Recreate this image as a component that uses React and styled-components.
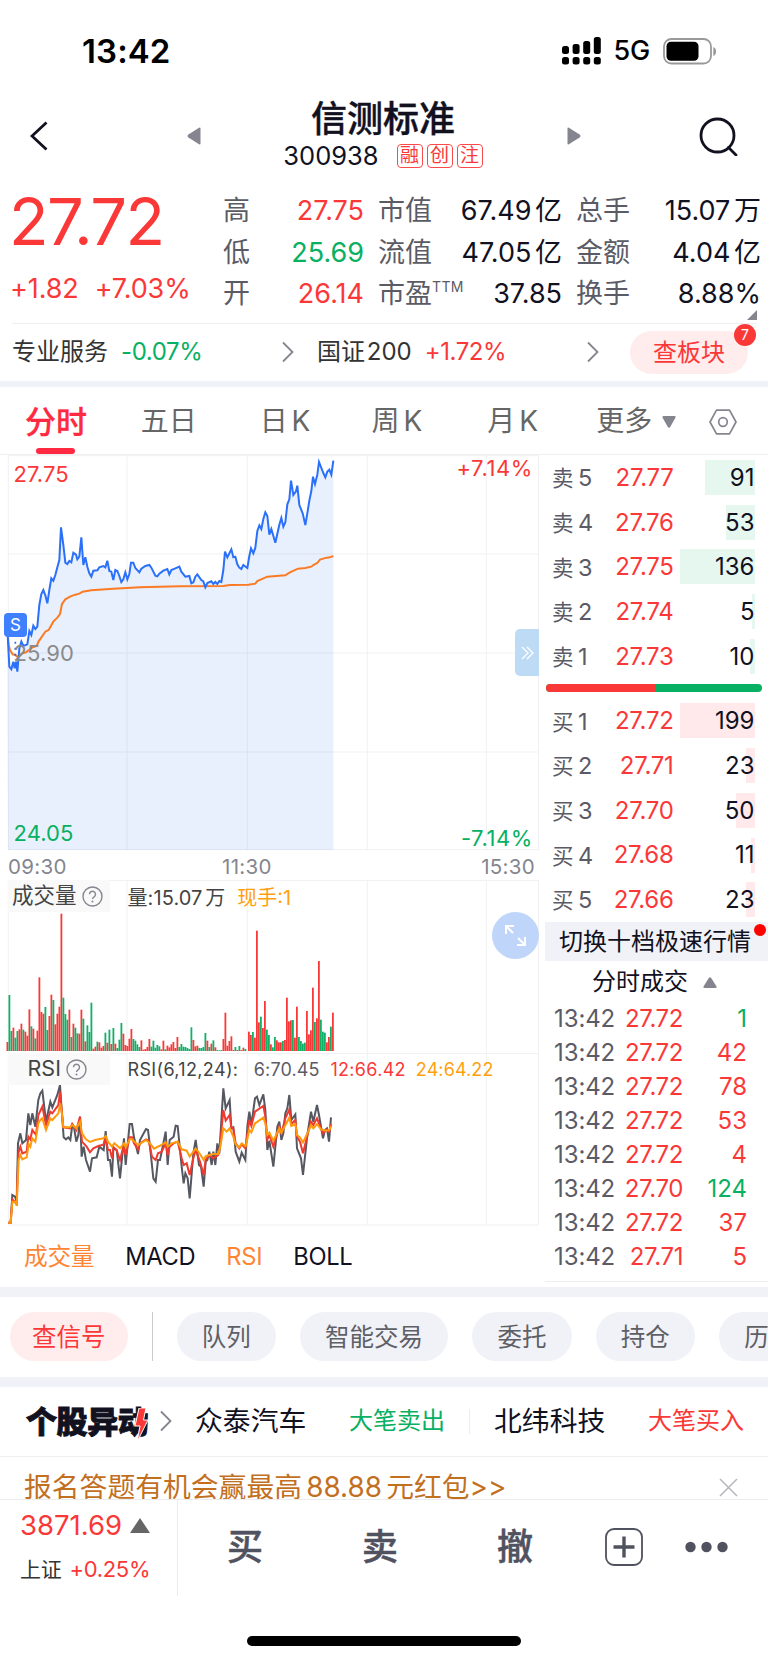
import { useState } from "react";
import styled, { createGlobalStyle } from "styled-components";

const GlobalStyle = createGlobalStyle`
  * {
    box-sizing: border-box;
  }
  body {
    margin: 0;
    background: #fff;
    color: #11111f;
    font-family: Inter, "Noto Sans CJK SC", sans-serif;
    line-height: 1.2;
  }
  svg {
    display: block;
    flex: none;
  }
`;

const RED = "#fb3838";
const GREEN = "#07b062";
const GRAY = "#5b5b66";

const Page = styled.div`
  width: 768px;
  height: 1663px;
  overflow: hidden;
  display: flex;
  flex-direction: column;
  > * {
    flex: none;
  }
`;

const Band = styled.div`
  height: ${(p) => p.$h}px;
  background: #f0f2f7;
`;

/* status bar */
const StatusBar = styled.div`
  height: 100px;
  padding: 3px 52px 0 82px;
  display: flex;
  align-items: center;
  justify-content: space-between;
  color: #000;
`;
const Clock = styled.div`
  font-size: 33px;
  font-weight: 600;
  letter-spacing: 0.1px;
`;
const StatusIcons = styled.div`
  display: flex;
  align-items: center;
  gap: 13px;
  font-size: 27px;
  font-weight: 500;
  letter-spacing: -0.2px;
`;

/* header */
const Header = styled.header`
  height: 72px;
  padding: 0 30px;
  display: flex;
  align-items: center;
  justify-content: space-between;
`;
const Side = styled.div`
  width: 171px;
  display: flex;
  align-items: center;
  justify-content: space-between;
`;
const TitleBox = styled.div`
  text-align: center;
  height: 74px;
  margin-right: 2px;
`;
const Title = styled.h1`
  margin: 0;
  font-size: 36px;
  line-height: 40px;
  font-weight: 500;
  -webkit-text-stroke: 0.4px #11111f;
`;
const CodeLine = styled.div`
  display: flex;
  align-items: center;
  height: 34px;
  gap: 4px;
  font-size: 25.5px;
`;
const Code = styled.span`
  margin-right: 14px;
`;
const Tag = styled.span`
  width: 26px;
  height: 24px;
  border: 1.5px solid #fb4a4a;
  border-radius: 4px;
  color: ${RED};
  font-size: 19px;
  line-height: 21px;
  text-align: center;
`;

/* quote */
const Quote = styled.section`
  height: 151px;
  padding: 18px 0 0 10px;
  display: flex;
`;
const PriceBox = styled.div`
  flex: none;
  width: 213px;
  color: ${RED};
`;
const BigPrice = styled.div`
  font-size: 65px;
  line-height: 64px;
  letter-spacing: -1.6px;
  margin-left: -1px;
`;
const Change = styled.div`
  display: flex;
  gap: 16px;
  padding-top: 14px;
  font-size: 27px;
  line-height: 41px;
  letter-spacing: -0.1px;
`;
const StatCol = styled.div`
  width: ${(p) => p.$w}px;
  margin-right: 14px;
  flex: none;
`;
const Stat = styled.div`
  height: 41.5px;
  padding-top: 1px;
  display: flex;
  align-items: center;
  justify-content: space-between;
  font-size: 27px;
  white-space: nowrap;
  word-spacing: -4px;
  color: ${GRAY};
  sup {
    font-size: 14px;
    line-height: 14px;
    vertical-align: 11px;
    letter-spacing: 0.4px;
  }
  b {
    font-weight: 400;
    color: ${(p) => p.$color || "#11111f"};
  }
`;
const Corner = styled.div`
  height: 0;
  display: flex;
  justify-content: flex-end;
  align-items: flex-end;
  padding-right: 11px;
  margin-bottom: 3px;
  margin-top: -3px;
`;
const Hairline = styled.div`
  height: 1px;
  margin: ${(p) => p.$top || 0}px ${(p) => p.$m || 0}px 0;
  background: #efeff2;
`;
const Sectors = styled.section`
  height: 57px;
  padding: 0 20px 0 12px;
  display: flex;
  align-items: center;
  font-size: 24px;
  color: #333;
`;
const Sector = styled.div`
  width: ${(p) => p.$w}px;
  padding-left: ${(p) => p.$pl || 0}px;
  display: flex;
  align-items: center;
  gap: 13px;
  white-space: nowrap;
  word-spacing: -5px;
  em {
    font-style: normal;
    color: ${(p) => p.$color};
    letter-spacing: -0.4px;
  }
  svg {
    margin-left: auto;
    margin-right: 1px;
  }
`;
const BoardPill = styled.div`
  position: relative;
  width: 118px;
  height: 43px;
  margin-left: auto;
  border-radius: 22px;
  background: #ffecec;
  color: ${RED};
  line-height: 43px;
  text-align: center;
`;
const Badge = styled.span`
  position: absolute;
  right: -8px;
  top: -7px;
  width: 22px;
  height: 22px;
  border-radius: 50%;
  background: ${RED};
  color: #fff;
  font-size: 14px;
  line-height: 22px;
`;

/* period tabs */
const Tabs = styled.nav`
  height: 67px;
  padding: 2px 31px 0 25px;
  display: flex;
  align-items: center;
  color: #666;
  font-size: 28px;
  word-spacing: -4px;
`;
const Tab = styled.div`
  position: relative;
  width: ${(p) => p.$w}px;
  white-space: nowrap;
  ${(p) =>
    p.$active &&
    `
    color: #ff2942;
    font-size: 31px;
    font-weight: 500;
    -webkit-text-stroke: 0.3px #ff2942;
    &::after {
      content: "";
      position: absolute;
      left: 11px;
      bottom: -14px;
      width: 39px;
      height: 6px;
      border-radius: 3px;
      background: #ff2942;
    }
  `}
`;
const MoreTab = styled.div`
  display: flex;
  align-items: center;
  gap: 10px;
  width: 113px;
`;

/* charts */
const Main = styled.main`
  height: 832px;
  display: flex;
`;
const Charts = styled.div`
  width: 545px;
  padding-left: 8px;
`;
const Pane = styled.div`
  position: relative;
  width: 531px;
  height: ${(p) => p.$h}px;
  svg {
    overflow: visible;
  }
`;
const ScaleLabel = styled.span`
  position: absolute;
  ${(p) => p.$side}: ${(p) => (p.$side === "right" ? 6 : 5.5)}px;
  top: ${(p) => p.$top}px;
  font-size: 22px;
  line-height: 24px;
  letter-spacing: ${(p) => (p.$side === "right" ? 0.6 : 0.1)}px;
  color: ${(p) => p.$color};
`;
const SideToggle = styled.button`
  position: absolute;
  right: 0;
  top: 174px;
  width: 24px;
  height: 47px;
  padding: 0 0 0 6px;
  border: 0;
  border-radius: 5px 0 0 5px;
  background: #bedbf6;
`;
const SellMark = styled.span`
  position: absolute;
  left: -4px;
  top: 158px;
  width: 23px;
  height: 24px;
  border-radius: 4px;
  background: #3f80ff;
  color: #fff;
  font-size: 17px;
  line-height: 24px;
  text-align: center;
`;
const TimeAxis = styled.div`
  width: 530px;
  height: 30px;
  padding-right: 3px;
  display: grid;
  grid-template-columns: 214px 1fr auto;
  font-size: 20.5px;
  letter-spacing: 0.3px;
  line-height: 33px;
  color: #85858f;
`;
const PaneHead = styled.div`
  position: absolute;
  left: 0;
  top: 0;
  height: 32px;
  display: flex;
  align-items: center;
  white-space: nowrap;
  color: #444;
`;
const PaneName = styled.div`
  width: 102px;
  height: 32px;
  margin-right: 17.5px;
  padding-left: ${(p) => p.$pad}px;
  display: flex;
  align-items: center;
  gap: 5.5px;
  background: #f9f9f9;
  font-size: 21.5px;
`;
const Reading = styled.span`
  font-size: ${(p) => p.$size || 20}px;
  margin-right: ${(p) => p.$gap || 0}px;
  letter-spacing: ${(p) => p.$ls || 0}px;
  word-spacing: -3px;
  padding-top: ${(p) => (p.$size ? 2 : 4)}px;
  color: ${(p) => p.$color || "#444"};
`;
const ExpandButton = styled.button`
  position: absolute;
  right: 0.5px;
  top: 32px;
  width: 47px;
  height: 47px;
  padding: 11px;
  border: 0;
  border-radius: 50%;
  background: #bfd5fa;
`;
const IndicatorTabs = styled.div`
  height: 62px;
  padding: 3px 0 0 16px;
  display: flex;
  align-items: center;
  gap: 31px;
  font-size: 23.7px;
`;
const Indicator = styled.span`
  letter-spacing: -0.3px;
  color: ${(p) => (p.$on ? "#ff8534" : "#11111f")};
`;

/* order book */
const Book = styled.aside`
  width: 223px;
`;
const BookRow = styled.div`
  position: relative;
  height: 44.7px;
  padding: 2px 13.5px 0 7px;
  display: grid;
  grid-template-columns: 50px 71.5px 1fr;
  align-items: center;
  font-size: 24px;
  color: ${GRAY};
  > span {
    position: relative;
    white-space: nowrap;
  }
`;
const Level = styled.span`
  font-size: 21.5px;
  word-spacing: -1.5px;
  b {
    font-size: 23.5px;
    font-weight: 400;
  }
`;
const RowPrice = styled.span`
  color: ${RED};
  text-align: right;
  letter-spacing: -0.3px;
`;
const RowQty = styled.span`
  color: #11111f;
  text-align: right;
`;
const DepthBar = styled.i`
  position: absolute;
  right: 13px;
  top: 5px;
  height: 35px;
  background: ${(p) => (p.$sell ? "#e6f7ef" : "#ffe9eb")};
`;
const RatioBar = styled.div`
  height: 8px;
  width: 216px;
  margin: 6px 0 6px 1px;
  border-radius: 4px;
  overflow: hidden;
  display: flex;
  background: ${GREEN};
  i {
    width: 51%;
    background: ${RED};
  }
`;
const SwitchDepth = styled.div`
  position: relative;
  height: 39px;
  padding-left: 14px;
  background: #f0f2f7;
  font-size: 24px;
  line-height: 39px;
  white-space: nowrap;
  &::after {
    content: "";
    position: absolute;
    right: 2px;
    top: 2px;
    width: 12px;
    height: 12px;
    border-radius: 50%;
    background: #f00;
  }
`;
const DealsTitle = styled.div`
  height: 40px;
  padding: 3px 0 0 47px;
  display: flex;
  align-items: center;
  gap: 15px;
  font-size: 24px;
`;
const Deal = styled.div`
  height: 34.1px;
  padding: 2px 21px 0 9px;
  display: grid;
  grid-template-columns: 66px 63px 1fr;
  align-items: center;
  font-size: 24px;
  letter-spacing: -0.1px;
  color: ${GRAY};
  b {
    font-weight: 400;
    text-align: right;
    letter-spacing: -0.4px;
    color: ${RED};
  }
  b:last-child {
    letter-spacing: 0;
    color: ${(p) => (p.$down ? GREEN : RED)};
  }
`;

/* shortcuts */
const Shortcuts = styled.section`
  height: 79.5px;
  padding-left: 10px;
  display: flex;
  align-items: center;
  gap: 24px;
  overflow: hidden;
`;
const Shortcut = styled.div`
  flex: none;
  height: 49px;
  padding: 0 ${(p) => (p.$hot ? 22 : 25.2)}px;
  border-radius: 25px;
  font-size: 24.5px;
  line-height: 51px;
  background: ${(p) => (p.$hot ? "#ffecec" : "#f0f2f7")};
  color: ${(p) => (p.$hot ? RED : "#5f5f66")};
`;
const Divider = styled.i`
  flex: none;
  width: 1px;
  height: ${(p) => p.$h}px;
  margin-left: ${(p) => p.$ml || 0}px;
  background: ${(p) => p.$c || "#ccc"};
`;

/* unusual moves */
const Moves = styled.section`
  height: 68.5px;
  padding: 0 24px 0 26px;
  display: flex;
  align-items: center;
  white-space: nowrap;
`;
const MovesLogo = styled.div`
  position: relative;
  width: 134px;
  font-size: 31px;
  font-weight: 900;
  letter-spacing: -0.4px;
  -webkit-text-stroke: 0.9px #11111f;
  svg {
    position: absolute;
    left: 108px;
    top: 5px;
  }
`;
const MoveName = styled.span`
  margin-left: ${(p) => p.$ml}px;
  width: 154.5px;
  font-size: 27.8px;
`;
const MoveKind = styled.span`
  font-size: 24px;
  padding-top: 1px;
  color: ${(p) => p.$color};
`;

/* promo strip */
const Promo = styled.section`
  height: 42px;
  padding: 0 30px 0 24px;
  overflow: hidden;
  display: flex;
  justify-content: space-between;
  color: #c2701f;
  font-size: 27.8px;
  line-height: 60px;
  white-space: nowrap;
  word-spacing: -3.5px;
  svg {
    margin-top: 21px;
  }
`;

/* bottom bar */
const BottomBar = styled.footer`
  height: 97px;
  border-top: 1px solid #ececef;
  display: flex;
`;
const IndexBox = styled.div`
  width: 178px;
  padding: 5px 0 0 20px;
  border-right: 1px solid #ececef;
`;
const IndexValue = styled.div`
  display: flex;
  align-items: center;
  gap: 8px;
  height: 42px;
  font-size: 27.5px;
  color: ${RED};
`;
const IndexChange = styled.div`
  display: flex;
  align-items: center;
  gap: 8px;
  height: 46px;
  font-size: 22px;
  letter-spacing: -0.3px;
  color: ${RED};
  span {
    font-size: 21px;
    color: #333;
  }
`;
const Actions = styled.div`
  flex: 1;
  display: flex;
  align-items: center;
  padding: 0 40px 2px 49px;
  font-size: 36px;
  font-weight: 500;
  color: #51525f;
`;
const Action = styled.div`
  width: ${(p) => p.$w || 135}px;
  padding-top: 2px;
  -webkit-text-stroke: 0.5px #51525f;
`;
const Dots = styled.svg`
  margin-left: auto;
`;
const HomeBar = styled.div`
  width: 274px;
  height: 10px;
  margin: 40px auto 0;
  border-radius: 5px;
  background: #000;
`;

const stats = [
  {
    w: 141,
    rows: [
      ["高", "27.75", RED],
      ["低", "25.69", GREEN],
      ["开", "26.14", RED],
    ],
  },
  {
    w: 184,
    rows: [
      ["市值", "67.49 亿"],
      ["流值", "47.05 亿"],
      ["市盈", "37.85", null, "TTM"],
    ],
  },
  {
    w: 185,
    rows: [
      ["总手", "15.07 万"],
      ["金额", "4.04 亿"],
      ["换手", "8.88%"],
    ],
  },
];

const sells = [
  [5, "27.77", 91],
  [4, "27.76", 53],
  [3, "27.75", 136],
  [2, "27.74", 5],
  [1, "27.73", 10],
];
const buys = [
  [1, "27.72", 199],
  [2, "27.71", 23],
  [3, "27.70", 50],
  [4, "27.68", 11],
  [5, "27.66", 23],
];
const deals = [
  ["27.72", 1, true],
  ["27.72", 42],
  ["27.72", 78],
  ["27.72", 53],
  ["27.72", 4],
  ["27.70", 124, true],
  ["27.72", 37],
  ["27.71", 5],
];

// chart paths are kept at three units per pixel
const price =
  "22,535 28,650 34,658 40,635 44,655 48,635 52,665 58,595 64,575 70,588 82,583 88,543 94,555 100,527 106,537 112,530 118,465 124,432 130,420 136,436 142,460 148,420 154,385 160,392 166,375 172,352 178,330 183,232 190,285 196,338 202,342 208,333 214,337 220,308 228,314 232,328 238,320 244,262 250,345 256,322 262,350 268,370 274,380 280,362 292,361 298,352 310,348 316,352 322,332 328,363 334,365 340,390 346,360 352,363 358,378 364,396 370,388 376,367 382,388 388,372 393,338 400,338 406,354 418,367 424,356 436,348 448,345 454,353 466,377 472,379 478,371 490,362 502,357 508,373 514,360 526,355 538,350 544,365 556,380 568,378 574,400 580,397 586,380 592,373 604,390 610,394 616,412 622,399 634,394 640,402 646,396 652,402 658,393 664,396 670,360 675,305 682,322 694,298 700,322 706,320 712,343 718,353 724,357 730,345 742,354 748,318 753,295 760,310 766,293 772,243 778,226 784,237 790,207 796,187 802,198 808,254 814,237 826,278 838,224 844,204 850,230 856,217 862,163 868,148 873,92 880,135 888,124 892,107 898,165 908,190 916,225 922,190 928,152 934,123 939,80 945,102 952,74 957,36 970,69 976,82 982,65 988,59 994,74 1000,32";
const average =
  "22,535 26,585 30,600 38,613 46,615 54,622 66,610 78,607 96,593 110,588 116,574 136,545 146,540 160,515 172,503 180,492 186,462 196,448 210,440 226,434 238,431 248,425 274,421 340,416 420,412 540,409 670,408 690,405 745,404 766,401 772,393 802,380 856,376 870,367 894,356 916,354 934,350 940,345 952,339 960,329 980,323 990,322 1000,318";

// one bar a minute: r = up, g = down
const volumes =
  "r27 g168 g60 r70 g40 g60 r65 r82 g64 r58 r46 r125 g74 r67 g38 r61 r221 r117 r112 g132 g63 r105 r169 g153 r80 r112 r133 r412 g160 g111 g94 r124 g42 r82 g70 g53 r52 r124 g97 r29 g77 g57 g145 r7 r13 g28 r26 r10 r15 g55 r25 g64 r21 g69 r22 g9 g34 g84 r52 r18 r15 r37 r66 g36 g31 g20 g12 r32 r4 r6 r12 r36 g13 g31 g10 g18 g14 r5 r31 g5 r16 r11 r20 r27 r9 r42 g12 g21 g13 g12 g9 g6 g71 r33 r14 r16 g9 g9 g12 g54 r31 g12 r22 g32 r11 g3 g2 g3 r36 r115 r16 r30 r44 r3 g12 r3 g15 r3 r10 g6 r0 r58 r48 g57 r40 r361 r86 g103 r69 r150 g64 g48 r20 g11 g42 r32 r26 r26 g30 r33 r160 r89 r92 g93 r40 r133 g42 g30 g22 g25 r120 r50 r62 r190 g87 r98 r270 g94 g58 g55 r26 r42 g73 r115".split(
    " "
  );

const rsi6 =
  "25,518 32,518 37,435 45,440 50,455 54,280 61,250 67,280 78,270 85,190 91,225 97,190 106,230 115,150 121,130 127,122 138,215 151,155 157,172 172,135 180,105 184,165 191,262 198,268 205,262 211,270 217,225 222,232 229,275 235,255 240,200 245,320 251,290 258,330 270,365 276,325 290,322 298,290 311,300 317,243 324,330 330,330 336,380 340,295 350,300 360,385 372,265 377,345 389,222 396,222 402,262 414,312 420,270 438,237 444,240 450,290 460,385 467,395 474,330 480,330 497,245 503,345 509,270 521,260 527,227 533,228 545,350 551,400 556,370 563,385 569,445 580,310 587,270 597,345 603,350 611,410 617,335 622,330 628,305 635,345 640,305 646,345 652,280 658,310 670,115 677,175 689,150 694,235 700,232 707,305 718,335 725,308 736,330 742,230 748,185 754,225 765,145 771,140 778,165 790,133 796,180 802,300 808,272 820,350 832,230 838,215 844,270 850,250 856,190 862,175 868,135 874,210 886,193 891,295 903,325 909,375 922,255 933,185 940,215 951,165 957,195 969,265 975,240 981,235 987,275 993,202";
const rsi12 =
  "25,518 32,518 37,448 50,462 55,310 61,290 67,310 80,305 85,260 91,268 97,240 108,255 115,195 127,170 138,225 151,185 157,190 175,165 180,125 184,170 190,232 210,235 217,222 229,240 240,200 246,275 260,290 270,307 280,295 295,288 310,284 317,265 324,300 330,300 336,325 341,292 350,300 360,330 370,290 377,315 389,262 396,262 402,280 414,298 420,280 438,268 446,272 456,320 467,330 474,310 485,305 497,280 503,315 509,290 521,280 533,275 545,325 551,345 560,340 569,375 580,325 587,300 600,335 611,375 617,330 628,315 640,325 655,315 660,290 670,180 677,212 689,195 694,232 700,235 707,280 718,295 725,283 736,295 748,210 754,228 765,185 790,168 796,200 802,268 808,255 820,290 838,230 844,250 856,205 868,178 874,222 886,210 891,260 900,275 909,310 920,265 933,215 940,225 951,205 963,235 969,250 981,238 988,245 993,222";
const rsi24 =
  "25,518 32,518 37,455 45,455 50,467 56,330 61,315 67,328 80,322 86,282 91,290 97,265 106,275 115,220 121,210 127,205 138,240 151,205 157,210 175,190 181,160 185,185 190,232 210,232 217,225 229,235 240,215 246,250 258,268 270,276 285,270 310,265 317,258 324,275 336,290 343,280 360,295 372,280 377,292 389,268 396,268 414,285 438,270 450,280 462,296 478,288 497,277 503,290 515,280 533,275 545,298 560,302 569,320 587,295 600,312 611,330 617,318 640,312 655,312 661,290 670,235 680,245 689,235 700,260 707,283 718,292 725,280 737,288 748,240 754,247 765,220 790,203 796,220 802,255 808,248 820,272 838,235 844,248 868,203 874,228 886,222 891,255 900,262 909,277 922,250 933,225 940,235 951,222 963,238 978,242 988,240 993,228";

const columns = [25, 381, 742, 1102, 1459, 1615];

const Grid = ({ top, bottom, rows }) => (
  <g stroke="#f1f1f3" strokeWidth="3">
    {columns.map((x) => (
      <path key={x} d={`M${x} ${top}V${bottom}`} />
    ))}
    {rows.map((y) => (
      <path key={y} d={`M24 ${y}H1616`} />
    ))}
  </g>
);

const Chevron = () => (
  <svg width="12" height="22" viewBox="0 0 12 22" fill="none">
    <path d="M1 1.5L10.5 11L1 20.5" stroke="#85858f" strokeWidth="1.8" />
  </svg>
);

const Help = () => (
  <svg width="21" height="21" viewBox="0 0 21 21" fill="none">
    <g stroke="#85858f" strokeWidth="1.4">
      <circle cx="10.5" cy="10.5" r="9.5" />
      <path d="M7.5 8.3a3 3 0 1 1 4.6 2.5c-1.1.8-1.6 1.2-1.6 2.3" />
    </g>
    <circle cx="10.5" cy="15.4" r="1" fill="#85858f" />
  </svg>
);

const PriceChart = () => (
  <Pane $h={395}>
    <svg width="531" height="395" viewBox="24 15 1593 1185" fill="none">
      <Grid top={15} bottom={1200} rows={[17, 312, 609, 906, 1199]} />
      <polygon
        points={`24,1200 ${price} 1000,1200`}
        fill="#2f74ee"
        fillOpacity="0.11"
      />
      <polyline points={average} stroke="#fb7a24" strokeWidth="6" />
      <polyline points={price} stroke="#2b70f8" strokeWidth="6" />
      <path d="M46 575V630" stroke="#2b70f8" strokeWidth="5" strokeDasharray="6 12" />
    </svg>
    <ScaleLabel $side="left" $top={7} $color={RED}>27.75</ScaleLabel>
    <ScaleLabel $side="left" $top={186} $color="#8a8a8a">25.90</ScaleLabel>
    <ScaleLabel $side="left" $top={366} $color={GREEN}>24.05</ScaleLabel>
    <ScaleLabel $side="right" $top={1} $color={RED}>+7.14%</ScaleLabel>
    <ScaleLabel $side="right" $top={371} $color={GREEN}>-7.14%</ScaleLabel>
    <SellMark>S</SellMark>
    <SideToggle>
      <svg width="14" height="14" viewBox="0 0 14 14" fill="none">
        <path d="M1 1L7 7L1 13M6 1L12 7L6 13" stroke="#fff" strokeWidth="1.4" />
      </svg>
    </SideToggle>
  </Pane>
);

const VolumeChart = () => (
  <Pane $h={173}>
    <svg width="531" height="173" viewBox="24 120 1593 519" fill="none">
      <Grid top={120} bottom={639} rows={[121.5]} />
      {volumes.map((v, i) => {
        const h = Number(v.slice(1));
        return (
          <rect
            key={i}
            x={(i > 120 ? 18 : 19.5) + i * 6}
            y={633 - h}
            width="5.4"
            height={h}
            fill={v[0] === "r" ? RED : "#10b067"}
          />
        );
      })}
    </svg>
    <PaneHead>
      <PaneName $pad={4}>
        成交量 <Help />
      </PaneName>
      <Reading $gap={12} $ls={0.1}>量:15.07 万</Reading>
      <Reading $color="#ff9f0e">现手:1</Reading>
    </PaneHead>
    <ExpandButton>
      <svg width="25" height="25" viewBox="0 0 25 25" fill="none" stroke="#fff" strokeWidth="2">
        <path d="M3 11V3H11M3 3L10 10M22 14V22H14M22 22L15 15" />
      </svg>
    </ExpandButton>
  </Pane>
);

const RsiChart = () => (
  <Pane $h={172}>
    <svg width="531" height="172" viewBox="24 9 1593 516" fill="none">
      <Grid top={9} bottom={526} rows={[10.5, 525]} />
      <g strokeWidth="6">
        <polyline points={rsi6} stroke="#555761" />
        <polyline points={rsi12} stroke="#f0392f" />
        <polyline points={rsi24} stroke="#ff9b0a" />
      </g>
    </svg>
    <PaneHead>
      <PaneName $pad={19.5}>
        RSI <Help />
      </PaneName>
      <Reading $size={18} $gap={15.5} $ls={0.35}>RSI(6,12,24):</Reading>
      <Reading $size={18} $gap={11} $ls={0.1} $color={GRAY}>6:70.45</Reading>
      <Reading $size={18} $gap={10} $ls={0.3} $color={RED}>12:66.42</Reading>
      <Reading $size={18} $ls={0.1} $color="#ff9f0e">24:64.22</Reading>
    </PaneHead>
  </Pane>
);

const BookSide = ({ name, rows, sell }) => {
  const max = Math.max(...rows.map((r) => r[2]));
  return rows.map(([level, p, qty]) => (
    <BookRow key={level}>
      <DepthBar $sell={sell} style={{ width: (qty / max) * 75 }} />
      <Level>
        {name} <b>{level}</b>
      </Level>
      <RowPrice>{p}</RowPrice>
      <RowQty>{qty}</RowQty>
    </BookRow>
  ));
};

export default function App() {
  const [period, setPeriod] = useState("分时");

  return (
    <Page>
      <GlobalStyle />
      <StatusBar>
        <Clock>13:42</Clock>
        <StatusIcons>
          <svg width="39" height="28" viewBox="0 0 39 28">
            {[0, 1, 2, 3].map((i) => (
              <g key={i}>
                <rect x={i * 10.6} y={[9, 7, 4, 0][i]} width="7" height={[8, 10, 13, 17][i]} rx="2.5" />
                <rect x={i * 10.6} y="20" width="7" height="7.5" rx="2.5" />
              </g>
            ))}
          </svg>
          <span>5G</span>
          <svg width="53" height="27" viewBox="0 0 53 27">
            <rect x="1" y="1" width="47" height="24.5" rx="7.5" fill="none" stroke="#999" strokeWidth="1.8" />
            <rect x="3.5" y="3.8" width="32" height="19" rx="4.5" />
            <path d="M50.3 9v9q2.8-1.2 2.8-4.5T50.3 9" fill="#999" />
          </svg>
        </StatusIcons>
      </StatusBar>

      <Header>
        <Side>
          <svg width="18" height="30" viewBox="0 0 18 30" fill="none">
            <path d="M16.5 1.5L2 15L16.5 28.5" stroke="#11111f" strokeWidth="2.8" />
          </svg>
          <svg width="14" height="18" viewBox="0 0 14 18">
            <path d="M13.5 1.5v15q0 1.5-1.4.8L1 10.2q-1-1.2 0-2.4L12.1.7q1.4-.7 1.4.8" fill="#85858f" />
          </svg>
        </Side>
        <TitleBox>
          <Title>信测标准</Title>
          <CodeLine>
            <Code>300938</Code>
            <Tag>融</Tag>
            <Tag>创</Tag>
            <Tag>注</Tag>
          </CodeLine>
        </TitleBox>
        <Side>
          <svg width="14" height="18" viewBox="0 0 14 18">
            <path d="M.5 1.5v15q0 1.5 1.4.8L13 10.2q1-1.2 0-2.4L1.9.7Q.5 0 .5 1.5" fill="#85858f" />
          </svg>
          <svg width="39" height="39" viewBox="0 0 39 39" fill="none" stroke="#11111f" strokeWidth="2.8">
            <circle cx="18.5" cy="18.5" r="16.5" />
            <path d="M29.5 30.5L37 38" strokeLinecap="round" />
          </svg>
        </Side>
      </Header>

      <Quote>
        <PriceBox>
          <BigPrice>27.72</BigPrice>
          <Change>
            <span>+1.82</span>
            <span>+7.03%</span>
          </Change>
        </PriceBox>
        {stats.map((col, i) => (
          <StatCol key={i} $w={col.w}>
            {col.rows.map(([label, value, color, sup]) => (
              <Stat key={label} $color={color}>
                <span>
                  {label}
                  {sup && <sup>{sup}</sup>}
                </span>
                <b>{value}</b>
              </Stat>
            ))}
          </StatCol>
        ))}
      </Quote>
      <Corner>
        <svg width="10" height="10" viewBox="0 0 10 10">
          <path d="M10 0V10H0Z" fill="#85858f" />
        </svg>
      </Corner>
      <Hairline $m={12} />

      <Sectors>
        <Sector $w={283} $color={GREEN}>
          专业服务 <em>-0.07%</em>
          <Chevron />
        </Sector>
        <Sector $w={305} $pl={22} $color={RED}>
          国证 200 <em>+1.72%</em>
          <Chevron />
        </Sector>
        <BoardPill>
          查板块<Badge>7</Badge>
        </BoardPill>
      </Sectors>
      <Band $h={6} />

      <Tabs>
        {[
          ["分时", 116],
          ["五日", 119],
          ["日 K", 112],
          ["周 K", 116],
          ["月 K", 109],
        ].map(([name, w]) => (
          <Tab key={name} $w={w} $active={name === period} onClick={() => setPeriod(name)}>
            {name}
          </Tab>
        ))}
        <MoreTab>
          更多
          <svg width="14" height="12" viewBox="0 0 14 12">
            <path d="M1.5 0h11q1.5 0 1 1.6L8.2 11q-1.2 1.6-2.4 0L.5 1.6Q0 0 1.5 0" fill="#85858f" />
          </svg>
        </MoreTab>
        <svg width="28" height="26" viewBox="0 0 28 26" fill="none" stroke="#85858f" strokeWidth="1.7">
          <path d="M7.5 1.2H20.5L27 13L20.5 24.8H7.5L1 13Z" strokeLinejoin="round" />
          <circle cx="14" cy="13" r="4.3" />
        </svg>
      </Tabs>
      <Hairline />

      <Main>
        <Charts>
          <PriceChart />
          <TimeAxis>
            <span>09:30</span>
            <span>11:30</span>
            <span>15:30</span>
          </TimeAxis>
          <VolumeChart />
          <RsiChart />
          <IndicatorTabs>
            <Indicator $on>成交量</Indicator>
            <Indicator>MACD</Indicator>
            <Indicator $on>RSI</Indicator>
            <Indicator>BOLL</Indicator>
          </IndicatorTabs>
        </Charts>
        <Book>
          <BookSide name="卖" rows={sells} sell />
          <RatioBar>
            <i />
          </RatioBar>
          <BookSide name="买" rows={buys} />
          <SwitchDepth>切换十档极速行情</SwitchDepth>
          <DealsTitle>
            分时成交
            <svg width="14" height="11" viewBox="0 0 14 11">
              <path d="M1.5 11h11q1.5-.2 1-1.6L8.2 1Q7-.6 5.8 1L.5 9.4Q0 11 1.5 11" fill="#85858f" />
            </svg>
          </DealsTitle>
          {deals.map(([p, qty, down], i) => (
            <Deal key={i} $down={down}>
              <span>13:42</span>
              <b>{p}</b>
              <b>{qty}</b>
            </Deal>
          ))}
          <Hairline $top={7} />
        </Book>
      </Main>
      <Band $h={10} />

      <Shortcuts>
        <Shortcut $hot>查信号</Shortcut>
        <Divider $h={49} />
        <Shortcut>队列</Shortcut>
        <Shortcut>智能交易</Shortcut>
        <Shortcut>委托</Shortcut>
        <Shortcut>持仓</Shortcut>
        <Shortcut>历史</Shortcut>
      </Shortcuts>
      <Band $h={10.5} />

      <Moves>
        <MovesLogo>
          个股异动
          <svg width="14" height="34" viewBox="0 0 14 34">
            <path d="M5 0H12L9.5 12H14L3 34L6 18H1Z" fill={RED} stroke="#fff" strokeWidth="1" />
          </svg>
        </MovesLogo>
        <Chevron />
        <MoveName $ml={23.5}>众泰汽车</MoveName>
        <MoveKind $color={GREEN}>大笔卖出</MoveKind>
        <Divider $h={25} $ml={24} $c="#ececef" />
        <MoveName $ml={24}>北纬科技</MoveName>
        <MoveKind $color={RED}>大笔买入</MoveKind>
      </Moves>
      <Hairline />

      <Promo>
        报名答题有机会赢最高 88.88 元红包&gt;&gt;
        <svg width="19" height="19" viewBox="0 0 19 19" fill="none">
          <path d="M1 1L18 18M18 1L1 18" stroke="#b5b5ba" strokeWidth="1.5" />
        </svg>
      </Promo>

      <BottomBar>
        <IndexBox>
          <IndexValue>
            3871.69
            <svg width="20" height="15" viewBox="0 0 20 15">
              <path d="M10 0L20 15H0Z" fill="#666" />
            </svg>
          </IndexValue>
          <IndexChange>
            <span>上证</span> +0.25%
          </IndexChange>
        </IndexBox>
        <Actions>
          <Action>买</Action>
          <Action>卖</Action>
          <Action $w={108}>撤</Action>
          <svg width="38" height="38" viewBox="0 0 38 38" fill="none" stroke="#51525f">
            <rect x="1" y="1" width="36" height="36" rx="8" strokeWidth="1.8" />
            <path d="M19 8.5V29.5M8.5 19H29.5" strokeWidth="3.4" />
          </svg>
          <Dots width="43" height="12" viewBox="0 0 43 12" fill="#51525f">
            <circle cx="5.5" cy="6" r="5.2" />
            <circle cx="21.5" cy="6" r="5.2" />
            <circle cx="37.5" cy="6" r="5.2" />
          </Dots>
        </Actions>
      </BottomBar>
      <HomeBar />
    </Page>
  );
}
